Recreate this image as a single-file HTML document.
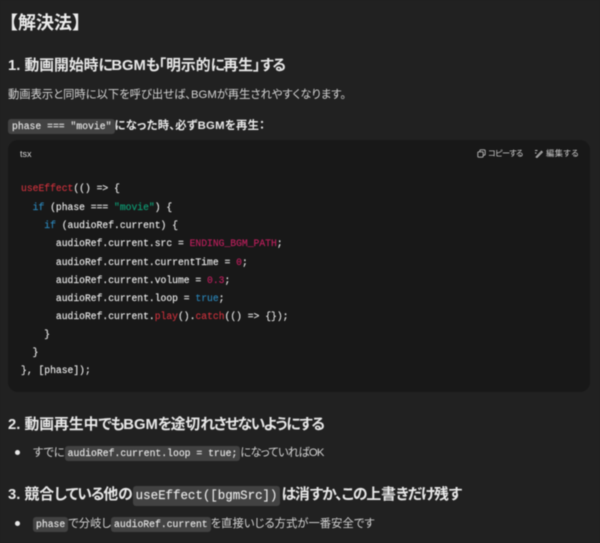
<!DOCTYPE html>
<html lang="ja"><head><meta charset="utf-8"><style>
html,body{margin:0;padding:0;background:#212121;}
#p{position:relative;width:600px;height:543px;overflow:hidden;background:#212121;color:#ececec;font-family:"Liberation Sans","Noto Sans CJK JP",sans-serif;filter:blur(.4px);font-feature-settings:"palt";}
.t{position:absolute;white-space:nowrap;}
.h{font-weight:700;font-size:14.8px;line-height:20px;color:#e8e8e8;}
.h i{font-style:normal;letter-spacing:-1.4px;}
.h3 i{letter-spacing:-1.1px;}
.b{font-size:11.3px;line-height:18px;color:#d4d4d4;}
code,.m{font-family:"Liberation Mono",monospace;}
code{background:#424242;border-radius:3px;font-size:9.75px;padding:2px 3px;color:#e6e6e6;font-weight:400;-webkit-text-stroke:.15px #e6e6e6;font-feature-settings:normal;}
#cb{position:absolute;left:8px;top:140px;width:582px;height:252px;background:#181818;border-radius:10px;}
.c{position:absolute;left:21px;white-space:pre;font-family:"Liberation Mono",monospace;font-size:9.7px;line-height:18px;color:#e8e8e8;-webkit-text-stroke:.15px currentColor;font-feature-settings:normal;}
.r{color:#c9313c}.k{color:#2b85b8}.s{color:#0f9a73}.n{color:#bb1f5c}
.dot{position:absolute;width:5px;height:5px;border-radius:50%;background:#e8e8e8;left:15px;}
</style></head><body><div id="p">
<div class="t" style="left:0;top:10px;font-size:18px;line-height:26px;font-weight:700;font-feature-settings:normal;">【解決法】</div>
<div class="t h" style="left:8px;top:56px;">1. 動画開始時<i>に</i>BGM<i>も</i>「明示的<i>に</i>再生」<i>する</i></div>
<div class="t b" style="left:8px;top:85.5px;">動画表示と同時に以下を呼び出せば、BGMが再生されやすくなります。</div>
<div class="t b" style="left:8px;top:117px;font-weight:700;color:#e8e8e8;letter-spacing:.3px;"><code style="padding:2px 4px;letter-spacing:0;margin-right:-1px;">phase === "movie"</code>になった時、必ずBGMを再生：</div>
<div id="cb"></div>
<div class="t" style="left:20px;top:148px;font-size:9px;line-height:13px;color:#d8d8d8;">tsx</div>
<svg class="t" style="left:477px;top:149px;" width="9" height="9" viewBox="0 0 9 9" fill="none" stroke="#bdbdbd" stroke-width=".9"><rect x="2.8" y=".8" width="5.4" height="5.4" rx="1.2"/><rect x=".8" y="2.8" width="5.4" height="5.4" rx="1.2" fill="#181818"/></svg>
<div class="t" style="left:488px;top:147px;font-size:8.2px;line-height:13px;color:#cfcfcf;letter-spacing:-.7px;">コピーする</div>
<svg class="t" style="left:534px;top:149px;" width="9" height="9" viewBox="0 0 9 9" fill="none" stroke="#bdbdbd" stroke-width=".9"><path d="M1 1.5h2.5M1 4h1.5M2 8L7.5 2.2l.9.9L3 8.5z"/></svg>
<div class="t" style="left:546px;top:147px;font-size:8.2px;line-height:13px;color:#cfcfcf;letter-spacing:.5px;">編集する</div>
<div class="c" style="top:180px;"><span class="r">useEffect</span>(() =&gt; {</div>
<div class="c" style="top:198.5px;">  <span class="k">if</span> (phase === <span class="s">"movie"</span>) {</div>
<div class="c" style="top:217px;">    <span class="k">if</span> (audioRef.current) {</div>
<div class="c" style="top:235px;">      audioRef.current.src = <span class="n">ENDING_BGM_PATH</span>;</div>
<div class="c" style="top:253.5px;">      audioRef.current.currentTime = <span class="n">0</span>;</div>
<div class="c" style="top:271.5px;">      audioRef.current.volume = <span class="n">0.3</span>;</div>
<div class="c" style="top:289.5px;">      audioRef.current.loop = <span class="k">true</span>;</div>
<div class="c" style="top:308px;">      audioRef.current.<span class="r">play</span>().<span class="r">catch</span>(() =&gt; {});</div>
<div class="c" style="top:326px;">    }</div>
<div class="c" style="top:344px;">  }</div>
<div class="c" style="top:362px;">}, [phase]);</div>
<div class="t h" style="left:8px;top:415px;">2. 動画再生中<i>でも</i>BGM<i>を</i>途切<i>れさせないようにする</i></div>
<div class="dot" style="top:449.5px;"></div>
<div class="t b" style="left:33px;top:444px;">すでに<code>audioRef.current.loop = true;</code><span style="letter-spacing:-.8px;">になっていればOK</span></div>
<div class="t h h3" style="left:8px;top:485px;">3. 競合<i>している</i>他<i>の</i><code style="font-size:12.45px;padding:3px 3px;margin:0 1px;">useEffect([bgmSrc])</code><i>は</i>消<i>すか、この</i>上書<i>きだけ</i>残<i>す</i></div>
<div class="dot" style="top:520.5px;"></div>
<div class="t b" style="left:33px;top:515px;letter-spacing:.05px;"><code style="letter-spacing:0;">phase</code>で分岐し<code style="letter-spacing:0;">audioRef.current</code>を直接いじる方式が一番安全です</div>
</div></body></html>
